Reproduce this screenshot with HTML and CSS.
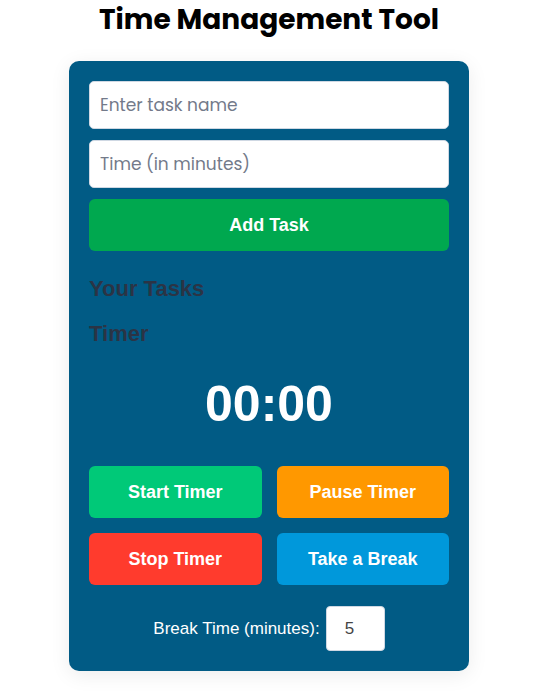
FILE: index.html
```html
<!DOCTYPE html>
<html lang="en">
<head>
<meta charset="utf-8">
<title>Time Management Tool</title>
<link rel="stylesheet" href="styles.css">
</head>
<body>
<div class="page">
  <h1 class="title">Time Management Tool</h1>
  <div class="card">
    <div class="task-form">
      <input class="field" type="text" placeholder="Enter task name">
      <input class="field" type="text" placeholder="Time (in minutes)">
      <button class="btn btn-add">Add Task</button>
    </div>
    <h2 class="section-title tasks-title">Your Tasks</h2>
    <h2 class="section-title timer-title">Timer</h2>
    <div class="timer">00:00</div>
    <div class="controls">
      <button class="btn btn-start">Start Timer</button>
      <button class="btn btn-pause">Pause Timer</button>
      <button class="btn btn-stop">Stop Timer</button>
      <button class="btn btn-break">Take a Break</button>
    </div>
    <div class="break-row">
      <label class="break-label">Break Time (minutes):</label>
      <input class="break-input" type="text" value="5">
    </div>
  </div>
</div>
</body>
</html>
```

FILE: styles.css
```css
* { box-sizing: border-box; }
body {
  margin: 0;
  background: #ffffff;
  font-family: "Liberation Sans", Arial, sans-serif;
}
.page {
  width: 538px;
  padding-bottom: 20px;
}
.title {
  margin: 0 0 23px 0;
  padding-top: 2px;
  font-family: "Poppins", "Open Sans", sans-serif;
  font-weight: 700;
  font-size: 28px;
  line-height: 36px;
  text-align: center;
  color: #000000;
}
.card {
  width: 400px;
  margin: 0 auto;
  padding: 20px 20px 20px;
  background: #015b85;
  border-radius: 10px;
  box-shadow: 0 4px 20px rgba(0, 0, 0, 0.08);
}
.task-form {
  display: flex;
  flex-direction: column;
  gap: 11px;
}
.field {
  height: 48px;
  width: 100%;
  padding: 0 10px;
  border: 1px solid #cfd8e3;
  border-radius: 5px;
  background: #ffffff;
  font-family: "Poppins", "Open Sans", sans-serif;
  font-size: 17px;
  color: #333;
}
.field::placeholder { color: #737a8a; }
.btn {
  border: none;
  border-radius: 6px;
  color: #ffffff;
  font-family: "Liberation Sans", Arial, sans-serif;
  font-weight: 700;
  font-size: 18px;
  height: 52px;
  padding: 0;
}
.btn-add { background: #00a84f; width: 100%; }
.section-title {
  margin: 0;
  font-size: 22px;
  font-weight: 700;
  line-height: 25px;
  color: #2b3445;
}
.tasks-title { margin-top: 25px; }
.timer-title { margin-top: 20px; }
.timer {
  margin-top: 30px;
  text-align: center;
  color: #ffffff;
  font-weight: 700;
  font-size: 50px;
  line-height: 57px;
}
.controls {
  margin-top: 33px;
  display: grid;
  grid-template-columns: 1fr 1fr;
  column-gap: 15px;
  row-gap: 15px;
}
.btn-start { background: #00c978; }
.btn-pause { background: #ff9800; }
.btn-stop { background: #ff3b2d; }
.btn-break { background: #0098db; }
.break-row {
  margin-top: 21px;
  display: flex;
  justify-content: center;
  align-items: center;
  gap: 6px;
}
.break-label {
  color: #ffffff;
  font-size: 17px;
}
.break-input {
  width: 59px;
  height: 45px;
  padding: 0 0 0 18px;
  border: 1px solid #cfd8e3;
  border-radius: 4px;
  background: #ffffff;
  font-family: "Liberation Sans", Arial, sans-serif;
  font-size: 17px;
  color: #444;
}
```
